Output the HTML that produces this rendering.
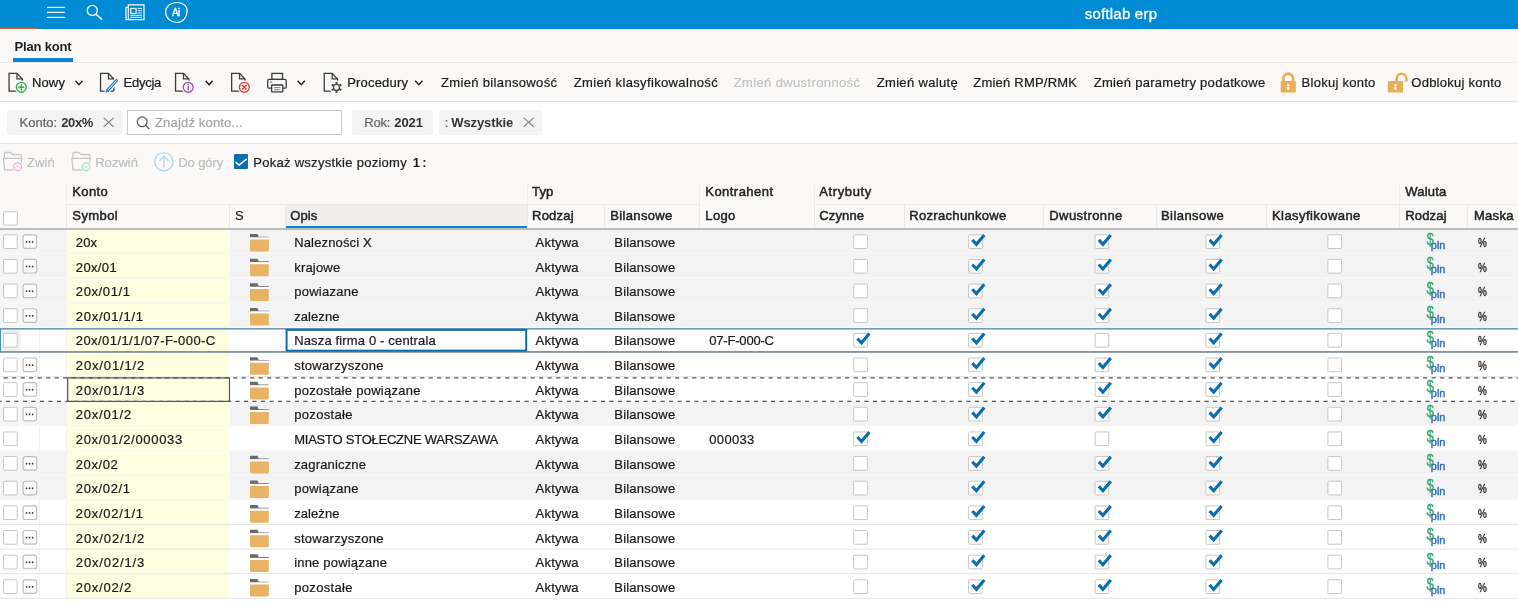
<!DOCTYPE html>
<html><head><meta charset="utf-8"><title>Plan kont</title>
<style>
html,body{margin:0;padding:0}
body{width:1518px;height:606px;overflow:hidden;background:#faf9f8;font-family:'Liberation Sans', sans-serif;position:relative}
.b{position:absolute}
.t{position:absolute;white-space:pre}
#tx{position:absolute;left:0;top:0;width:1518px;height:606px;will-change:transform}
svg{position:absolute;left:0;top:0;will-change:transform}
</style></head>
<body>
<div class="b" style="left:0;top:0;width:1518px;height:29px;background:#008ad3"></div>
<div class="b" style="left:0;top:28px;width:37px;height:1px;background:#d9673a"></div>
<div class="b" style="left:0;top:62px;width:1518px;height:1px;background:#e6e6e5"></div>
<div class="b" style="left:13px;top:58px;width:60.2px;height:4px;background:#0a84d0"></div>
<div class="b" style="left:0;top:101px;width:1518px;height:43px;background:#fff;border-top:1px solid #e3e3e2;border-bottom:1px solid #e3e3e2;box-sizing:border-box"></div>
<div class="b" style="left:7.3px;top:110.3px;width:114.4px;height:24.4px;background:#f3f3f3;border-radius:3px"></div>
<div class="b" style="left:127px;top:110.3px;width:215px;height:24.4px;background:#fff;border:1px solid #cbcbcb;box-sizing:border-box"></div>
<div class="b" style="left:351.8px;top:110.3px;width:81.5px;height:24.4px;background:#f3f3f3;border-radius:3px"></div>
<div class="b" style="left:438.8px;top:110.3px;width:103.2px;height:24.4px;background:#f3f3f3;border-radius:3px"></div>
<div class="b" style="left:234px;top:154px;width:14px;height:15px;background:#0b70b1;border-radius:1px"></div>
<div class="b" style="left:285.5px;top:205px;width:241.5px;height:23px;background:#efeeed"></div>
<div class="b" style="left:285.5px;top:226px;width:241.5px;height:2.3px;background:#0a84d0"></div>
<div class="b" style="left:66.7px;top:204px;width:632.6px;height:1px;background:#eae9e8"></div>
<div class="b" style="left:814.3px;top:204px;width:703.7px;height:1px;background:#eae9e8"></div>
<div class="b" style="left:66.2px;top:185px;width:1px;height:19px;background:#efeeed"></div>
<div class="b" style="left:66.2px;top:204px;width:1px;height:24px;background:#eae9e8"></div>
<div class="b" style="left:526.5px;top:185px;width:1px;height:19px;background:#efeeed"></div>
<div class="b" style="left:526.5px;top:204px;width:1px;height:24px;background:#eae9e8"></div>
<div class="b" style="left:698.8px;top:185px;width:1px;height:19px;background:#efeeed"></div>
<div class="b" style="left:698.8px;top:204px;width:1px;height:24px;background:#eae9e8"></div>
<div class="b" style="left:813.8px;top:185px;width:1px;height:19px;background:#efeeed"></div>
<div class="b" style="left:813.8px;top:204px;width:1px;height:24px;background:#eae9e8"></div>
<div class="b" style="left:1398.8px;top:185px;width:1px;height:19px;background:#efeeed"></div>
<div class="b" style="left:1398.8px;top:204px;width:1px;height:24px;background:#eae9e8"></div>
<div class="b" style="left:229.2px;top:205px;width:1px;height:23px;background:#eae9e8"></div>
<div class="b" style="left:284.8px;top:205px;width:1px;height:23px;background:#eae9e8"></div>
<div class="b" style="left:603.8px;top:205px;width:1px;height:23px;background:#eae9e8"></div>
<div class="b" style="left:903.5px;top:205px;width:1px;height:23px;background:#eae9e8"></div>
<div class="b" style="left:1043.2px;top:205px;width:1px;height:23px;background:#eae9e8"></div>
<div class="b" style="left:1155.5px;top:205px;width:1px;height:23px;background:#eae9e8"></div>
<div class="b" style="left:1265.8px;top:205px;width:1px;height:23px;background:#eae9e8"></div>
<div class="b" style="left:1466.9px;top:205px;width:1px;height:23px;background:#eae9e8"></div>
<div class="b" style="left:0;top:230px;width:1518px;height:376px;background:#fff"></div>
<div class="b" style="left:0;top:229px;width:1518px;height:25px;background:#f3f3f3"></div>
<div class="b" style="left:67px;top:229px;width:163px;height:25px;background:#feffe1"></div>
<div class="b" style="left:0px;top:229px;width:39px;height:24px;background:#f5f5f5"></div>
<div class="b" style="left:0;top:254px;width:1518px;height:24px;background:#f3f3f3"></div>
<div class="b" style="left:67px;top:254px;width:163px;height:24px;background:#feffe1"></div>
<div class="b" style="left:0px;top:254px;width:39px;height:23px;background:#f5f5f5"></div>
<div class="b" style="left:0;top:278px;width:1518px;height:25px;background:#f3f3f3"></div>
<div class="b" style="left:67px;top:278px;width:163px;height:25px;background:#feffe1"></div>
<div class="b" style="left:0px;top:278px;width:39px;height:24px;background:#f5f5f5"></div>
<div class="b" style="left:0;top:303px;width:1518px;height:25px;background:#f3f3f3"></div>
<div class="b" style="left:67px;top:303px;width:163px;height:25px;background:#feffe1"></div>
<div class="b" style="left:0px;top:303px;width:39px;height:24px;background:#f5f5f5"></div>
<div class="b" style="left:0;top:328px;width:1518px;height:24px;background:#fff"></div>
<div class="b" style="left:67px;top:328px;width:163px;height:24px;background:#feffe1"></div>
<div class="b" style="left:39px;top:328px;width:1px;height:23px;background:#f1f1f1"></div>
<div class="b" style="left:66px;top:328px;width:1px;height:23px;background:#f1f1f1"></div>
<div class="b" style="left:0;top:352px;width:1518px;height:25px;background:#fff"></div>
<div class="b" style="left:67px;top:352px;width:163px;height:25px;background:#feffe1"></div>
<div class="b" style="left:39px;top:352px;width:1px;height:24px;background:#f1f1f1"></div>
<div class="b" style="left:66px;top:352px;width:1px;height:24px;background:#f1f1f1"></div>
<div class="b" style="left:0;top:377px;width:1518px;height:25px;background:#fff"></div>
<div class="b" style="left:67px;top:377px;width:163px;height:25px;background:#feffe1"></div>
<div class="b" style="left:39px;top:377px;width:1px;height:24px;background:#f1f1f1"></div>
<div class="b" style="left:66px;top:377px;width:1px;height:24px;background:#f1f1f1"></div>
<div class="b" style="left:0;top:402px;width:1518px;height:24px;background:#f3f3f3"></div>
<div class="b" style="left:67px;top:402px;width:163px;height:24px;background:#feffe1"></div>
<div class="b" style="left:0px;top:402px;width:39px;height:23px;background:#f5f5f5"></div>
<div class="b" style="left:0;top:426px;width:1518px;height:25px;background:#fff"></div>
<div class="b" style="left:67px;top:426px;width:163px;height:25px;background:#feffe1"></div>
<div class="b" style="left:39px;top:426px;width:1px;height:24px;background:#f1f1f1"></div>
<div class="b" style="left:66px;top:426px;width:1px;height:24px;background:#f1f1f1"></div>
<div class="b" style="left:0;top:451px;width:1518px;height:25px;background:#f3f3f3"></div>
<div class="b" style="left:67px;top:451px;width:163px;height:25px;background:#feffe1"></div>
<div class="b" style="left:0px;top:451px;width:39px;height:24px;background:#f5f5f5"></div>
<div class="b" style="left:0;top:476px;width:1518px;height:24px;background:#f3f3f3"></div>
<div class="b" style="left:67px;top:476px;width:163px;height:24px;background:#feffe1"></div>
<div class="b" style="left:0px;top:476px;width:39px;height:23px;background:#f5f5f5"></div>
<div class="b" style="left:0;top:500px;width:1518px;height:25px;background:#fff"></div>
<div class="b" style="left:67px;top:500px;width:163px;height:25px;background:#feffe1"></div>
<div class="b" style="left:39px;top:500px;width:1px;height:24px;background:#f1f1f1"></div>
<div class="b" style="left:66px;top:500px;width:1px;height:24px;background:#f1f1f1"></div>
<div class="b" style="left:0;top:525px;width:1518px;height:25px;background:#fff"></div>
<div class="b" style="left:67px;top:525px;width:163px;height:25px;background:#feffe1"></div>
<div class="b" style="left:39px;top:525px;width:1px;height:24px;background:#f1f1f1"></div>
<div class="b" style="left:66px;top:525px;width:1px;height:24px;background:#f1f1f1"></div>
<div class="b" style="left:0;top:550px;width:1518px;height:24px;background:#fff"></div>
<div class="b" style="left:67px;top:550px;width:163px;height:24px;background:#feffe1"></div>
<div class="b" style="left:39px;top:550px;width:1px;height:23px;background:#f1f1f1"></div>
<div class="b" style="left:66px;top:550px;width:1px;height:23px;background:#f1f1f1"></div>
<div class="b" style="left:0;top:574px;width:1518px;height:25px;background:#fff"></div>
<div class="b" style="left:67px;top:574px;width:163px;height:25px;background:#feffe1"></div>
<div class="b" style="left:39px;top:574px;width:1px;height:24px;background:#f1f1f1"></div>
<div class="b" style="left:66px;top:574px;width:1px;height:24px;background:#f1f1f1"></div>
<div class="b" style="left:0;top:228px;width:1518px;height:2px;background:#bcbcbc"></div>
<svg width="1518" height="606" viewBox="0 0 1518 606">
<rect x="0" y="252.79" width="1518" height="1.1" fill="#f9f9f9"/>
<rect x="67" y="252.79" width="163" height="1.1" fill="#f6f6ea"/>
<rect x="0" y="277.44" width="1518" height="1.1" fill="#f9f9f9"/>
<rect x="67" y="277.44" width="163" height="1.1" fill="#f6f6ea"/>
<rect x="0" y="302.08" width="1518" height="1.1" fill="#f9f9f9"/>
<rect x="67" y="302.08" width="163" height="1.1" fill="#f6f6ea"/>
<rect x="0" y="326.72" width="1518" height="1.1" fill="#f9f9f9"/>
<rect x="67" y="326.72" width="163" height="1.1" fill="#f6f6ea"/>
<rect x="0" y="351.36" width="1518" height="1.1" fill="#e6e6e6"/>
<rect x="67" y="351.36" width="163" height="1.1" fill="#ededdf"/>
<rect x="0" y="376.01" width="1518" height="1.1" fill="#e6e6e6"/>
<rect x="67" y="376.01" width="163" height="1.1" fill="#ededdf"/>
<rect x="0" y="400.65" width="1518" height="1.1" fill="#f9f9f9"/>
<rect x="67" y="400.65" width="163" height="1.1" fill="#f6f6ea"/>
<rect x="0" y="425.29" width="1518" height="1.1" fill="#f9f9f9"/>
<rect x="67" y="425.29" width="163" height="1.1" fill="#f6f6ea"/>
<rect x="0" y="449.94" width="1518" height="1.1" fill="#f9f9f9"/>
<rect x="67" y="449.94" width="163" height="1.1" fill="#f6f6ea"/>
<rect x="0" y="474.58" width="1518" height="1.1" fill="#f9f9f9"/>
<rect x="67" y="474.58" width="163" height="1.1" fill="#f6f6ea"/>
<rect x="0" y="499.22" width="1518" height="1.1" fill="#f9f9f9"/>
<rect x="67" y="499.22" width="163" height="1.1" fill="#f6f6ea"/>
<rect x="0" y="523.87" width="1518" height="1.1" fill="#e6e6e6"/>
<rect x="67" y="523.87" width="163" height="1.1" fill="#ededdf"/>
<rect x="0" y="548.51" width="1518" height="1.1" fill="#e6e6e6"/>
<rect x="67" y="548.51" width="163" height="1.1" fill="#ededdf"/>
<rect x="0" y="573.15" width="1518" height="1.1" fill="#e6e6e6"/>
<rect x="67" y="573.15" width="163" height="1.1" fill="#ededdf"/>
<rect x="0" y="597.80" width="1518" height="1.1" fill="#e6e6e6"/>
<rect x="67" y="597.80" width="163" height="1.1" fill="#ededdf"/>
<rect x="47" y="6.80" width="17.8" height="1.2" fill="#fff"/>
<rect x="47" y="11.75" width="17.8" height="1.2" fill="#fff"/>
<rect x="47" y="16.80" width="17.8" height="1.2" fill="#fff"/>
<circle cx="92.3" cy="10.4" r="5" fill="none" stroke="#fff" stroke-width="1.4"/><line x1="96" y1="14.2" x2="102" y2="19.6" stroke="#fff" stroke-width="1.5"/>
<path d="M128.3 4.9 H144 V19.6 H126 V7.3 H128.3 Z" fill="none" stroke="#fff" stroke-width="1.2"/><line x1="128.3" y1="7" x2="128.3" y2="19.6" stroke="#fff" stroke-width="1.1"/><rect x="130.8" y="8.4" width="5.3" height="5" fill="none" stroke="#fff" stroke-width="1.1"/><path d="M137.7 8.4 h4.3 M137.7 10.7 h4.3 M137.7 13 h4.3 M130.3 15.3 h11.7 M130.3 17.3 h11.7" stroke="#fff" stroke-width="0.9" fill="none"/>
<path d="M165.7 12.8 C165.2 6.5 170.5 2.3 177.2 2.5 C183.6 2.7 187.6 6.2 187.1 11.6 C186.6 17.8 182.6 22.6 177 22.5 C171 22.4 166.2 18.8 165.7 12.8 Z" fill="none" stroke="#fff" stroke-width="1.2"/>
<path d="M22.35 91.05 H9.05 V73.35 H16.95 L22.35 78.95 V91.05" fill="none" stroke="#3c3c3c" stroke-width="1.3" stroke-linejoin="miter"/><path d="M16.95 73.35 V78.95 H22.35" fill="none" stroke="#3c3c3c" stroke-width="1.2"/>
<circle cx="21.30" cy="87.30" r="6.7" fill="#faf9f8"/><circle cx="21.30" cy="87.30" r="4.95" fill="none" stroke="#2db34e" stroke-width="1.3"/><path d="M18.30 87.30 h6 M21.30 84.30 v6" stroke="#2db34e" stroke-width="1.4" fill="none"/>
<polyline points="75.50,80.80 79.00,84.80 82.50,80.80" fill="none" stroke="#222" stroke-width="1.4"/>
<path d="M113.85 91.05 H100.55 V73.35 H108.45 L113.85 78.95 V91.05" fill="none" stroke="#3c3c3c" stroke-width="1.3" stroke-linejoin="miter"/><path d="M108.45 73.35 V78.95 H113.85" fill="none" stroke="#3c3c3c" stroke-width="1.2"/>
<line x1="117.4" y1="79.4" x2="105.8" y2="92.5" stroke="#faf9f8" stroke-width="5.6"/>
<path d="M108.9 91.3 L105.9 92.4 L106.7 89.3 Z" fill="#2c8ad6" stroke="#2c8ad6" stroke-width="0.8" stroke-linejoin="round"/><line x1="116.4" y1="80.5" x2="107.9" y2="90.1" stroke="#2c8ad6" stroke-width="3.1" stroke-linecap="round"/><line x1="116.2" y1="80.8" x2="108.2" y2="89.8" stroke="#e9f3fb" stroke-width="0.9" stroke-linecap="round"/>
<path d="M188.85 91.05 H175.55 V73.35 H183.45 L188.85 78.95 V91.05" fill="none" stroke="#3c3c3c" stroke-width="1.3" stroke-linejoin="miter"/><path d="M183.45 73.35 V78.95 H188.85" fill="none" stroke="#3c3c3c" stroke-width="1.2"/>
<circle cx="188.20" cy="87.30" r="6.7" fill="#faf9f8"/><circle cx="188.20" cy="87.30" r="4.95" fill="none" stroke="#a443b5" stroke-width="1.3"/><path d="M188.20 86.10 v4.2" stroke="#a443b5" stroke-width="1.3" fill="none"/><circle cx="188.20" cy="84.50" r="0.8" fill="#a443b5"/>
<polyline points="205.70,80.80 209.10,84.80 212.50,80.80" fill="none" stroke="#222" stroke-width="1.4"/>
<path d="M244.95 91.05 H231.65 V73.35 H239.55 L244.95 78.95 V91.05" fill="none" stroke="#3c3c3c" stroke-width="1.3" stroke-linejoin="miter"/><path d="M239.55 73.35 V78.95 H244.95" fill="none" stroke="#3c3c3c" stroke-width="1.2"/>
<circle cx="244.30" cy="87.30" r="6.7" fill="#faf9f8"/><circle cx="244.30" cy="87.30" r="4.95" fill="none" stroke="#e53a3a" stroke-width="1.3"/><path d="M242.10 85.10 l4.4 4.4 M246.50 85.10 l-4.4 4.4" stroke="#e53a3a" stroke-width="1.4" fill="none"/>
<rect x="271.9" y="73.4" width="10.6" height="6" fill="none" stroke="#3c3c3c" stroke-width="1.3"/><path d="M271.5 88.2 H269 a1.3 1.3 0 0 1 -1.3 -1.3 V80.7 a1.3 1.3 0 0 1 1.3 -1.3 H284.9 a1.3 1.3 0 0 1 1.3 1.3 V86.9 a1.3 1.3 0 0 1 -1.3 1.3 H283" fill="none" stroke="#3c3c3c" stroke-width="1.3"/><rect x="271.6" y="85" width="11.2" height="6.9" rx="0.6" fill="#faf9f8" stroke="#3c3c3c" stroke-width="1.3"/><path d="M274 87.6 h6.4 M274 89.7 h6.4" stroke="#777" stroke-width="0.9"/><rect x="270" y="81.4" width="2.2" height="1.2" fill="#2c8ad6"/>
<polyline points="297.70,80.80 301.25,84.80 304.80,80.80" fill="none" stroke="#222" stroke-width="1.4"/>
<path d="M337.55 91.05 H324.25 V73.35 H332.15 L337.55 78.95 V91.05" fill="none" stroke="#3c3c3c" stroke-width="1.3" stroke-linejoin="miter"/><path d="M332.15 73.35 V78.95 H337.55" fill="none" stroke="#3c3c3c" stroke-width="1.2"/>
<circle cx="336.50" cy="87.40" r="6.9" fill="#faf9f8"/><circle cx="336.50" cy="87.40" r="3.0" fill="none" stroke="#4a4a4a" stroke-width="1.4"/><line x1="339.44" y1="89.10" x2="341.26" y2="90.15" stroke="#4a4a4a" stroke-width="2.1"/><line x1="336.50" y1="90.80" x2="336.50" y2="92.90" stroke="#4a4a4a" stroke-width="2.1"/><line x1="333.56" y1="89.10" x2="331.74" y2="90.15" stroke="#4a4a4a" stroke-width="2.1"/><line x1="333.56" y1="85.70" x2="331.74" y2="84.65" stroke="#4a4a4a" stroke-width="2.1"/><line x1="336.50" y1="84.00" x2="336.50" y2="81.90" stroke="#4a4a4a" stroke-width="2.1"/><line x1="339.44" y1="85.70" x2="341.26" y2="84.65" stroke="#4a4a4a" stroke-width="2.1"/>
<polyline points="415.20,80.80 418.85,84.80 422.50,80.80" fill="none" stroke="#222" stroke-width="1.4"/>
<rect x="1280.70" y="81.1" width="15.1" height="11.4" rx="0.8" fill="#e8b055"/><path d="M1283.40 82 V78.6 a4.85 4.85 0 0 1 9.7 0 V82" fill="none" stroke="#e8b055" stroke-width="2.8"/><circle cx="1288.25" cy="85.3" r="1.25" fill="#fff"/><rect x="1287.05" y="87.2" width="2.4" height="2.6" fill="#fff"/>
<rect x="1387.80" y="81.1" width="15.2" height="11.4" rx="0.8" fill="#e8b055"/><path d="M1396.70 82 V78.6 a4.85 4.85 0 0 1 9.7 0 V81.6" fill="none" stroke="#e8b055" stroke-width="2.6"/><circle cx="1395.40" cy="85.3" r="1.25" fill="#fff"/><rect x="1394.20" y="87.2" width="2.4" height="2.6" fill="#fff"/>
<path d="M103.7 117.9 l9.9 8.9 M113.6 117.9 l-9.9 8.9" stroke="#858585" stroke-width="1.15" fill="none"/>
<circle cx="142.2" cy="121.8" r="4.9" fill="none" stroke="#555" stroke-width="1.2"/><line x1="145.8" y1="125.4" x2="149.3" y2="129" stroke="#555" stroke-width="1.3"/>
<path d="M523.7 117.9 l9.9 8.9 M533.6 117.9 l-9.9 8.9" stroke="#858585" stroke-width="1.15" fill="none"/>
<path d="M4.40 158 V153.5 a1 1 0 0 1 1 -1 H10.10 L12.90 154.5 H20.20 a1 1 0 0 1 1 1 V158" fill="none" stroke="#c6c6c6" stroke-width="1.3"/><path d="M4.60 170 L3.40 158.4 H21.90 L21.20 163" fill="none" stroke="#c6c6c6" stroke-width="1.3" stroke-linejoin="round"/><path d="M4.00 170 H13.70" stroke="#c6c6c6" stroke-width="1.3"/><circle cx="17.60" cy="166.80" r="5.1" fill="#faf9f8"/><circle cx="17.60" cy="166.80" r="3.9" fill="none" stroke="#e8b6e4" stroke-width="1.2"/><polyline points="15.60,167.70 17.60,165.70 19.60,167.70" fill="none" stroke="#e8b6e4" stroke-width="1"/>
<path d="M72.90 158 V153.5 a1 1 0 0 1 1 -1 H78.60 L81.40 154.5 H88.70 a1 1 0 0 1 1 1 V158" fill="none" stroke="#c6c6c6" stroke-width="1.3"/><path d="M73.10 170 L71.90 158.4 H90.40 L89.70 163" fill="none" stroke="#c6c6c6" stroke-width="1.3" stroke-linejoin="round"/><path d="M72.50 170 H82.20" stroke="#c6c6c6" stroke-width="1.3"/><circle cx="86.10" cy="166.80" r="5.1" fill="#faf9f8"/><circle cx="86.10" cy="166.80" r="3.9" fill="none" stroke="#a6dfb4" stroke-width="1.2"/><polyline points="84.10,165.90 86.10,167.90 88.10,165.90" fill="none" stroke="#a6dfb4" stroke-width="1"/>
<circle cx="163.9" cy="161.7" r="9.1" fill="none" stroke="#b3d7f0" stroke-width="1.4"/><path d="M163.9 167.6 V156.4 M159.3 161 L163.9 156.2 L168.5 161" fill="none" stroke="#b3d7f0" stroke-width="1.4"/>
<polyline points="235.6,162.2 239.1,165 246.8,158.8" fill="none" stroke="#fff" stroke-width="1.6"/>
<rect x="3.5" y="211.8" width="13.8" height="13.3" rx="0.7" fill="#fff" stroke="#c7c7c7"/>
<rect x="3.50" y="234.80" width="13.7" height="13.7" rx="0.7" fill="#fff" stroke="#c7c7c7" stroke-width="1"/>
<rect x="23.10" y="234.80" width="13.6" height="13.6" rx="2.3" fill="#fcfcfc" stroke="#bebebe" stroke-width="1.15"/><rect x="25.80" y="241.10" width="1.5" height="1.6" fill="#333"/><rect x="28.85" y="241.10" width="1.5" height="1.6" fill="#333"/><rect x="31.90" y="241.10" width="1.5" height="1.6" fill="#333"/>
<path d="M250.00 234.00 h7.4 l1.3 2.7 h10.1 v0.9 h-18.8 z" fill="#6a6a6a"/><rect x="250.00" y="237.50" width="18.8" height="2.2" fill="#fff"/><path d="M250.00 239.60 h18.8 v10.6 a1.4 1.4 0 0 1 -1.4 1.4 h-16 a1.4 1.4 0 0 1 -1.4 -1.4 z" fill="#e8b364"/>
<rect x="853.70" y="234.80" width="13.7" height="13.7" rx="0.7" fill="#fff" stroke="#c7c7c7" stroke-width="1"/>
<rect x="968.60" y="234.80" width="13.7" height="13.7" rx="0.7" fill="#fff" stroke="#c7c7c7" stroke-width="1"/><polyline points="972.30,239.90 976.40,244.30 984.30,234.90" fill="none" stroke="#0a6eae" stroke-width="3.1"/>
<rect x="1095.10" y="234.80" width="13.7" height="13.7" rx="0.7" fill="#fff" stroke="#c7c7c7" stroke-width="1"/><polyline points="1098.80,239.90 1102.90,244.30 1110.80,234.90" fill="none" stroke="#0a6eae" stroke-width="3.1"/>
<rect x="1205.90" y="234.80" width="13.7" height="13.7" rx="0.7" fill="#fff" stroke="#c7c7c7" stroke-width="1"/><polyline points="1209.60,239.90 1213.70,244.30 1221.60,234.90" fill="none" stroke="#0a6eae" stroke-width="3.1"/>
<rect x="1327.90" y="234.80" width="13.7" height="13.7" rx="0.7" fill="#fff" stroke="#c7c7c7" stroke-width="1"/>
<text x="1426.4" y="244.50" font-family="'Liberation Sans', sans-serif" font-size="16.6" fill="#38a673" stroke="#38a673" stroke-width="0.3" textLength="7.4" lengthAdjust="spacingAndGlyphs">$</text><text x="1430.8" y="248.70" font-family="'Liberation Sans', sans-serif" font-size="11.3" font-weight="400" fill="#3a73b9" stroke="#3a73b9" stroke-width="0.45" textLength="14.6" lengthAdjust="spacingAndGlyphs">pln</text>
<rect x="3.50" y="259.44" width="13.7" height="13.7" rx="0.7" fill="#fff" stroke="#c7c7c7" stroke-width="1"/>
<rect x="23.10" y="259.44" width="13.6" height="13.6" rx="2.3" fill="#fcfcfc" stroke="#bebebe" stroke-width="1.15"/><rect x="25.80" y="265.74" width="1.5" height="1.6" fill="#333"/><rect x="28.85" y="265.74" width="1.5" height="1.6" fill="#333"/><rect x="31.90" y="265.74" width="1.5" height="1.6" fill="#333"/>
<path d="M250.00 258.64 h7.4 l1.3 2.7 h10.1 v0.9 h-18.8 z" fill="#6a6a6a"/><rect x="250.00" y="262.14" width="18.8" height="2.2" fill="#fff"/><path d="M250.00 264.24 h18.8 v10.6 a1.4 1.4 0 0 1 -1.4 1.4 h-16 a1.4 1.4 0 0 1 -1.4 -1.4 z" fill="#e8b364"/>
<rect x="853.70" y="259.44" width="13.7" height="13.7" rx="0.7" fill="#fff" stroke="#c7c7c7" stroke-width="1"/>
<rect x="968.60" y="259.44" width="13.7" height="13.7" rx="0.7" fill="#fff" stroke="#c7c7c7" stroke-width="1"/><polyline points="972.30,264.54 976.40,268.94 984.30,259.54" fill="none" stroke="#0a6eae" stroke-width="3.1"/>
<rect x="1095.10" y="259.44" width="13.7" height="13.7" rx="0.7" fill="#fff" stroke="#c7c7c7" stroke-width="1"/><polyline points="1098.80,264.54 1102.90,268.94 1110.80,259.54" fill="none" stroke="#0a6eae" stroke-width="3.1"/>
<rect x="1205.90" y="259.44" width="13.7" height="13.7" rx="0.7" fill="#fff" stroke="#c7c7c7" stroke-width="1"/><polyline points="1209.60,264.54 1213.70,268.94 1221.60,259.54" fill="none" stroke="#0a6eae" stroke-width="3.1"/>
<rect x="1327.90" y="259.44" width="13.7" height="13.7" rx="0.7" fill="#fff" stroke="#c7c7c7" stroke-width="1"/>
<text x="1426.4" y="269.14" font-family="'Liberation Sans', sans-serif" font-size="16.6" fill="#38a673" stroke="#38a673" stroke-width="0.3" textLength="7.4" lengthAdjust="spacingAndGlyphs">$</text><text x="1430.8" y="273.34" font-family="'Liberation Sans', sans-serif" font-size="11.3" font-weight="400" fill="#3a73b9" stroke="#3a73b9" stroke-width="0.45" textLength="14.6" lengthAdjust="spacingAndGlyphs">pln</text>
<rect x="3.50" y="284.09" width="13.7" height="13.7" rx="0.7" fill="#fff" stroke="#c7c7c7" stroke-width="1"/>
<rect x="23.10" y="284.09" width="13.6" height="13.6" rx="2.3" fill="#fcfcfc" stroke="#bebebe" stroke-width="1.15"/><rect x="25.80" y="290.39" width="1.5" height="1.6" fill="#333"/><rect x="28.85" y="290.39" width="1.5" height="1.6" fill="#333"/><rect x="31.90" y="290.39" width="1.5" height="1.6" fill="#333"/>
<path d="M250.00 283.29 h7.4 l1.3 2.7 h10.1 v0.9 h-18.8 z" fill="#6a6a6a"/><rect x="250.00" y="286.79" width="18.8" height="2.2" fill="#fff"/><path d="M250.00 288.89 h18.8 v10.6 a1.4 1.4 0 0 1 -1.4 1.4 h-16 a1.4 1.4 0 0 1 -1.4 -1.4 z" fill="#e8b364"/>
<rect x="853.70" y="284.09" width="13.7" height="13.7" rx="0.7" fill="#fff" stroke="#c7c7c7" stroke-width="1"/>
<rect x="968.60" y="284.09" width="13.7" height="13.7" rx="0.7" fill="#fff" stroke="#c7c7c7" stroke-width="1"/><polyline points="972.30,289.19 976.40,293.59 984.30,284.19" fill="none" stroke="#0a6eae" stroke-width="3.1"/>
<rect x="1095.10" y="284.09" width="13.7" height="13.7" rx="0.7" fill="#fff" stroke="#c7c7c7" stroke-width="1"/><polyline points="1098.80,289.19 1102.90,293.59 1110.80,284.19" fill="none" stroke="#0a6eae" stroke-width="3.1"/>
<rect x="1205.90" y="284.09" width="13.7" height="13.7" rx="0.7" fill="#fff" stroke="#c7c7c7" stroke-width="1"/><polyline points="1209.60,289.19 1213.70,293.59 1221.60,284.19" fill="none" stroke="#0a6eae" stroke-width="3.1"/>
<rect x="1327.90" y="284.09" width="13.7" height="13.7" rx="0.7" fill="#fff" stroke="#c7c7c7" stroke-width="1"/>
<text x="1426.4" y="293.79" font-family="'Liberation Sans', sans-serif" font-size="16.6" fill="#38a673" stroke="#38a673" stroke-width="0.3" textLength="7.4" lengthAdjust="spacingAndGlyphs">$</text><text x="1430.8" y="297.99" font-family="'Liberation Sans', sans-serif" font-size="11.3" font-weight="400" fill="#3a73b9" stroke="#3a73b9" stroke-width="0.45" textLength="14.6" lengthAdjust="spacingAndGlyphs">pln</text>
<rect x="3.50" y="308.73" width="13.7" height="13.7" rx="0.7" fill="#fff" stroke="#c7c7c7" stroke-width="1"/>
<rect x="23.10" y="308.73" width="13.6" height="13.6" rx="2.3" fill="#fcfcfc" stroke="#bebebe" stroke-width="1.15"/><rect x="25.80" y="315.03" width="1.5" height="1.6" fill="#333"/><rect x="28.85" y="315.03" width="1.5" height="1.6" fill="#333"/><rect x="31.90" y="315.03" width="1.5" height="1.6" fill="#333"/>
<path d="M250.00 307.93 h7.4 l1.3 2.7 h10.1 v0.9 h-18.8 z" fill="#6a6a6a"/><rect x="250.00" y="311.43" width="18.8" height="2.2" fill="#fff"/><path d="M250.00 313.53 h18.8 v10.6 a1.4 1.4 0 0 1 -1.4 1.4 h-16 a1.4 1.4 0 0 1 -1.4 -1.4 z" fill="#e8b364"/>
<rect x="853.70" y="308.73" width="13.7" height="13.7" rx="0.7" fill="#fff" stroke="#c7c7c7" stroke-width="1"/>
<rect x="968.60" y="308.73" width="13.7" height="13.7" rx="0.7" fill="#fff" stroke="#c7c7c7" stroke-width="1"/><polyline points="972.30,313.83 976.40,318.23 984.30,308.83" fill="none" stroke="#0a6eae" stroke-width="3.1"/>
<rect x="1095.10" y="308.73" width="13.7" height="13.7" rx="0.7" fill="#fff" stroke="#c7c7c7" stroke-width="1"/><polyline points="1098.80,313.83 1102.90,318.23 1110.80,308.83" fill="none" stroke="#0a6eae" stroke-width="3.1"/>
<rect x="1205.90" y="308.73" width="13.7" height="13.7" rx="0.7" fill="#fff" stroke="#c7c7c7" stroke-width="1"/><polyline points="1209.60,313.83 1213.70,318.23 1221.60,308.83" fill="none" stroke="#0a6eae" stroke-width="3.1"/>
<rect x="1327.90" y="308.73" width="13.7" height="13.7" rx="0.7" fill="#fff" stroke="#c7c7c7" stroke-width="1"/>
<text x="1426.4" y="318.43" font-family="'Liberation Sans', sans-serif" font-size="16.6" fill="#38a673" stroke="#38a673" stroke-width="0.3" textLength="7.4" lengthAdjust="spacingAndGlyphs">$</text><text x="1430.8" y="322.63" font-family="'Liberation Sans', sans-serif" font-size="11.3" font-weight="400" fill="#3a73b9" stroke="#3a73b9" stroke-width="0.45" textLength="14.6" lengthAdjust="spacingAndGlyphs">pln</text>
<rect x="1.5" y="329.47" width="19.3" height="21.6" fill="#efefef"/>
<rect x="3.50" y="333.37" width="13.7" height="13.7" rx="0.7" fill="#fff" stroke="#c7c7c7" stroke-width="1"/>
<rect x="853.70" y="333.37" width="13.7" height="13.7" rx="0.7" fill="#fff" stroke="#c7c7c7" stroke-width="1"/><polyline points="857.40,338.47 861.50,342.87 869.40,333.47" fill="none" stroke="#0a6eae" stroke-width="3.1"/>
<rect x="968.60" y="333.37" width="13.7" height="13.7" rx="0.7" fill="#fff" stroke="#c7c7c7" stroke-width="1"/><polyline points="972.30,338.47 976.40,342.87 984.30,333.47" fill="none" stroke="#0a6eae" stroke-width="3.1"/>
<rect x="1095.10" y="333.37" width="13.7" height="13.7" rx="0.7" fill="#fff" stroke="#c7c7c7" stroke-width="1"/>
<rect x="1205.90" y="333.37" width="13.7" height="13.7" rx="0.7" fill="#fff" stroke="#c7c7c7" stroke-width="1"/><polyline points="1209.60,338.47 1213.70,342.87 1221.60,333.47" fill="none" stroke="#0a6eae" stroke-width="3.1"/>
<rect x="1327.90" y="333.37" width="13.7" height="13.7" rx="0.7" fill="#fff" stroke="#c7c7c7" stroke-width="1"/>
<text x="1426.4" y="343.07" font-family="'Liberation Sans', sans-serif" font-size="16.6" fill="#38a673" stroke="#38a673" stroke-width="0.3" textLength="7.4" lengthAdjust="spacingAndGlyphs">$</text><text x="1430.8" y="347.27" font-family="'Liberation Sans', sans-serif" font-size="11.3" font-weight="400" fill="#3a73b9" stroke="#3a73b9" stroke-width="0.45" textLength="14.6" lengthAdjust="spacingAndGlyphs">pln</text>
<rect x="3.50" y="358.01" width="13.7" height="13.7" rx="0.7" fill="#fff" stroke="#c7c7c7" stroke-width="1"/>
<rect x="23.10" y="358.01" width="13.6" height="13.6" rx="2.3" fill="#fcfcfc" stroke="#bebebe" stroke-width="1.15"/><rect x="25.80" y="364.31" width="1.5" height="1.6" fill="#333"/><rect x="28.85" y="364.31" width="1.5" height="1.6" fill="#333"/><rect x="31.90" y="364.31" width="1.5" height="1.6" fill="#333"/>
<path d="M250.00 357.21 h7.4 l1.3 2.7 h10.1 v0.9 h-18.8 z" fill="#6a6a6a"/><rect x="250.00" y="360.71" width="18.8" height="2.2" fill="#fff"/><path d="M250.00 362.81 h18.8 v10.6 a1.4 1.4 0 0 1 -1.4 1.4 h-16 a1.4 1.4 0 0 1 -1.4 -1.4 z" fill="#e8b364"/>
<rect x="853.70" y="358.01" width="13.7" height="13.7" rx="0.7" fill="#fff" stroke="#c7c7c7" stroke-width="1"/>
<rect x="968.60" y="358.01" width="13.7" height="13.7" rx="0.7" fill="#fff" stroke="#c7c7c7" stroke-width="1"/><polyline points="972.30,363.12 976.40,367.51 984.30,358.12" fill="none" stroke="#0a6eae" stroke-width="3.1"/>
<rect x="1095.10" y="358.01" width="13.7" height="13.7" rx="0.7" fill="#fff" stroke="#c7c7c7" stroke-width="1"/><polyline points="1098.80,363.12 1102.90,367.51 1110.80,358.12" fill="none" stroke="#0a6eae" stroke-width="3.1"/>
<rect x="1205.90" y="358.01" width="13.7" height="13.7" rx="0.7" fill="#fff" stroke="#c7c7c7" stroke-width="1"/><polyline points="1209.60,363.12 1213.70,367.51 1221.60,358.12" fill="none" stroke="#0a6eae" stroke-width="3.1"/>
<rect x="1327.90" y="358.01" width="13.7" height="13.7" rx="0.7" fill="#fff" stroke="#c7c7c7" stroke-width="1"/>
<text x="1426.4" y="367.71" font-family="'Liberation Sans', sans-serif" font-size="16.6" fill="#38a673" stroke="#38a673" stroke-width="0.3" textLength="7.4" lengthAdjust="spacingAndGlyphs">$</text><text x="1430.8" y="371.91" font-family="'Liberation Sans', sans-serif" font-size="11.3" font-weight="400" fill="#3a73b9" stroke="#3a73b9" stroke-width="0.45" textLength="14.6" lengthAdjust="spacingAndGlyphs">pln</text>
<rect x="3.50" y="382.66" width="13.7" height="13.7" rx="0.7" fill="#fff" stroke="#c7c7c7" stroke-width="1"/>
<rect x="23.10" y="382.66" width="13.6" height="13.6" rx="2.3" fill="#fcfcfc" stroke="#bebebe" stroke-width="1.15"/><rect x="25.80" y="388.96" width="1.5" height="1.6" fill="#333"/><rect x="28.85" y="388.96" width="1.5" height="1.6" fill="#333"/><rect x="31.90" y="388.96" width="1.5" height="1.6" fill="#333"/>
<path d="M250.00 381.86 h7.4 l1.3 2.7 h10.1 v0.9 h-18.8 z" fill="#6a6a6a"/><rect x="250.00" y="385.36" width="18.8" height="2.2" fill="#fff"/><path d="M250.00 387.46 h18.8 v10.6 a1.4 1.4 0 0 1 -1.4 1.4 h-16 a1.4 1.4 0 0 1 -1.4 -1.4 z" fill="#e8b364"/>
<rect x="853.70" y="382.66" width="13.7" height="13.7" rx="0.7" fill="#fff" stroke="#c7c7c7" stroke-width="1"/>
<rect x="968.60" y="382.66" width="13.7" height="13.7" rx="0.7" fill="#fff" stroke="#c7c7c7" stroke-width="1"/><polyline points="972.30,387.76 976.40,392.16 984.30,382.76" fill="none" stroke="#0a6eae" stroke-width="3.1"/>
<rect x="1095.10" y="382.66" width="13.7" height="13.7" rx="0.7" fill="#fff" stroke="#c7c7c7" stroke-width="1"/><polyline points="1098.80,387.76 1102.90,392.16 1110.80,382.76" fill="none" stroke="#0a6eae" stroke-width="3.1"/>
<rect x="1205.90" y="382.66" width="13.7" height="13.7" rx="0.7" fill="#fff" stroke="#c7c7c7" stroke-width="1"/><polyline points="1209.60,387.76 1213.70,392.16 1221.60,382.76" fill="none" stroke="#0a6eae" stroke-width="3.1"/>
<rect x="1327.90" y="382.66" width="13.7" height="13.7" rx="0.7" fill="#fff" stroke="#c7c7c7" stroke-width="1"/>
<text x="1426.4" y="392.36" font-family="'Liberation Sans', sans-serif" font-size="16.6" fill="#38a673" stroke="#38a673" stroke-width="0.3" textLength="7.4" lengthAdjust="spacingAndGlyphs">$</text><text x="1430.8" y="396.56" font-family="'Liberation Sans', sans-serif" font-size="11.3" font-weight="400" fill="#3a73b9" stroke="#3a73b9" stroke-width="0.45" textLength="14.6" lengthAdjust="spacingAndGlyphs">pln</text>
<rect x="3.50" y="407.30" width="13.7" height="13.7" rx="0.7" fill="#fff" stroke="#c7c7c7" stroke-width="1"/>
<rect x="23.10" y="407.30" width="13.6" height="13.6" rx="2.3" fill="#fcfcfc" stroke="#bebebe" stroke-width="1.15"/><rect x="25.80" y="413.60" width="1.5" height="1.6" fill="#333"/><rect x="28.85" y="413.60" width="1.5" height="1.6" fill="#333"/><rect x="31.90" y="413.60" width="1.5" height="1.6" fill="#333"/>
<path d="M250.00 406.50 h7.4 l1.3 2.7 h10.1 v0.9 h-18.8 z" fill="#6a6a6a"/><rect x="250.00" y="410.00" width="18.8" height="2.2" fill="#fff"/><path d="M250.00 412.10 h18.8 v10.6 a1.4 1.4 0 0 1 -1.4 1.4 h-16 a1.4 1.4 0 0 1 -1.4 -1.4 z" fill="#e8b364"/>
<rect x="853.70" y="407.30" width="13.7" height="13.7" rx="0.7" fill="#fff" stroke="#c7c7c7" stroke-width="1"/>
<rect x="968.60" y="407.30" width="13.7" height="13.7" rx="0.7" fill="#fff" stroke="#c7c7c7" stroke-width="1"/><polyline points="972.30,412.40 976.40,416.80 984.30,407.40" fill="none" stroke="#0a6eae" stroke-width="3.1"/>
<rect x="1095.10" y="407.30" width="13.7" height="13.7" rx="0.7" fill="#fff" stroke="#c7c7c7" stroke-width="1"/><polyline points="1098.80,412.40 1102.90,416.80 1110.80,407.40" fill="none" stroke="#0a6eae" stroke-width="3.1"/>
<rect x="1205.90" y="407.30" width="13.7" height="13.7" rx="0.7" fill="#fff" stroke="#c7c7c7" stroke-width="1"/><polyline points="1209.60,412.40 1213.70,416.80 1221.60,407.40" fill="none" stroke="#0a6eae" stroke-width="3.1"/>
<rect x="1327.90" y="407.30" width="13.7" height="13.7" rx="0.7" fill="#fff" stroke="#c7c7c7" stroke-width="1"/>
<text x="1426.4" y="417.00" font-family="'Liberation Sans', sans-serif" font-size="16.6" fill="#38a673" stroke="#38a673" stroke-width="0.3" textLength="7.4" lengthAdjust="spacingAndGlyphs">$</text><text x="1430.8" y="421.20" font-family="'Liberation Sans', sans-serif" font-size="11.3" font-weight="400" fill="#3a73b9" stroke="#3a73b9" stroke-width="0.45" textLength="14.6" lengthAdjust="spacingAndGlyphs">pln</text>
<rect x="3.50" y="431.94" width="13.7" height="13.7" rx="0.7" fill="#fff" stroke="#c7c7c7" stroke-width="1"/>
<rect x="853.70" y="431.94" width="13.7" height="13.7" rx="0.7" fill="#fff" stroke="#c7c7c7" stroke-width="1"/><polyline points="857.40,437.04 861.50,441.44 869.40,432.04" fill="none" stroke="#0a6eae" stroke-width="3.1"/>
<rect x="968.60" y="431.94" width="13.7" height="13.7" rx="0.7" fill="#fff" stroke="#c7c7c7" stroke-width="1"/><polyline points="972.30,437.04 976.40,441.44 984.30,432.04" fill="none" stroke="#0a6eae" stroke-width="3.1"/>
<rect x="1095.10" y="431.94" width="13.7" height="13.7" rx="0.7" fill="#fff" stroke="#c7c7c7" stroke-width="1"/>
<rect x="1205.90" y="431.94" width="13.7" height="13.7" rx="0.7" fill="#fff" stroke="#c7c7c7" stroke-width="1"/><polyline points="1209.60,437.04 1213.70,441.44 1221.60,432.04" fill="none" stroke="#0a6eae" stroke-width="3.1"/>
<rect x="1327.90" y="431.94" width="13.7" height="13.7" rx="0.7" fill="#fff" stroke="#c7c7c7" stroke-width="1"/>
<text x="1426.4" y="441.64" font-family="'Liberation Sans', sans-serif" font-size="16.6" fill="#38a673" stroke="#38a673" stroke-width="0.3" textLength="7.4" lengthAdjust="spacingAndGlyphs">$</text><text x="1430.8" y="445.84" font-family="'Liberation Sans', sans-serif" font-size="11.3" font-weight="400" fill="#3a73b9" stroke="#3a73b9" stroke-width="0.45" textLength="14.6" lengthAdjust="spacingAndGlyphs">pln</text>
<rect x="3.50" y="456.59" width="13.7" height="13.7" rx="0.7" fill="#fff" stroke="#c7c7c7" stroke-width="1"/>
<rect x="23.10" y="456.59" width="13.6" height="13.6" rx="2.3" fill="#fcfcfc" stroke="#bebebe" stroke-width="1.15"/><rect x="25.80" y="462.89" width="1.5" height="1.6" fill="#333"/><rect x="28.85" y="462.89" width="1.5" height="1.6" fill="#333"/><rect x="31.90" y="462.89" width="1.5" height="1.6" fill="#333"/>
<path d="M250.00 455.79 h7.4 l1.3 2.7 h10.1 v0.9 h-18.8 z" fill="#6a6a6a"/><rect x="250.00" y="459.29" width="18.8" height="2.2" fill="#fff"/><path d="M250.00 461.39 h18.8 v10.6 a1.4 1.4 0 0 1 -1.4 1.4 h-16 a1.4 1.4 0 0 1 -1.4 -1.4 z" fill="#e8b364"/>
<rect x="853.70" y="456.59" width="13.7" height="13.7" rx="0.7" fill="#fff" stroke="#c7c7c7" stroke-width="1"/>
<rect x="968.60" y="456.59" width="13.7" height="13.7" rx="0.7" fill="#fff" stroke="#c7c7c7" stroke-width="1"/><polyline points="972.30,461.69 976.40,466.09 984.30,456.69" fill="none" stroke="#0a6eae" stroke-width="3.1"/>
<rect x="1095.10" y="456.59" width="13.7" height="13.7" rx="0.7" fill="#fff" stroke="#c7c7c7" stroke-width="1"/><polyline points="1098.80,461.69 1102.90,466.09 1110.80,456.69" fill="none" stroke="#0a6eae" stroke-width="3.1"/>
<rect x="1205.90" y="456.59" width="13.7" height="13.7" rx="0.7" fill="#fff" stroke="#c7c7c7" stroke-width="1"/><polyline points="1209.60,461.69 1213.70,466.09 1221.60,456.69" fill="none" stroke="#0a6eae" stroke-width="3.1"/>
<rect x="1327.90" y="456.59" width="13.7" height="13.7" rx="0.7" fill="#fff" stroke="#c7c7c7" stroke-width="1"/>
<text x="1426.4" y="466.29" font-family="'Liberation Sans', sans-serif" font-size="16.6" fill="#38a673" stroke="#38a673" stroke-width="0.3" textLength="7.4" lengthAdjust="spacingAndGlyphs">$</text><text x="1430.8" y="470.49" font-family="'Liberation Sans', sans-serif" font-size="11.3" font-weight="400" fill="#3a73b9" stroke="#3a73b9" stroke-width="0.45" textLength="14.6" lengthAdjust="spacingAndGlyphs">pln</text>
<rect x="3.50" y="481.23" width="13.7" height="13.7" rx="0.7" fill="#fff" stroke="#c7c7c7" stroke-width="1"/>
<rect x="23.10" y="481.23" width="13.6" height="13.6" rx="2.3" fill="#fcfcfc" stroke="#bebebe" stroke-width="1.15"/><rect x="25.80" y="487.53" width="1.5" height="1.6" fill="#333"/><rect x="28.85" y="487.53" width="1.5" height="1.6" fill="#333"/><rect x="31.90" y="487.53" width="1.5" height="1.6" fill="#333"/>
<path d="M250.00 480.43 h7.4 l1.3 2.7 h10.1 v0.9 h-18.8 z" fill="#6a6a6a"/><rect x="250.00" y="483.93" width="18.8" height="2.2" fill="#fff"/><path d="M250.00 486.03 h18.8 v10.6 a1.4 1.4 0 0 1 -1.4 1.4 h-16 a1.4 1.4 0 0 1 -1.4 -1.4 z" fill="#e8b364"/>
<rect x="853.70" y="481.23" width="13.7" height="13.7" rx="0.7" fill="#fff" stroke="#c7c7c7" stroke-width="1"/>
<rect x="968.60" y="481.23" width="13.7" height="13.7" rx="0.7" fill="#fff" stroke="#c7c7c7" stroke-width="1"/><polyline points="972.30,486.33 976.40,490.73 984.30,481.33" fill="none" stroke="#0a6eae" stroke-width="3.1"/>
<rect x="1095.10" y="481.23" width="13.7" height="13.7" rx="0.7" fill="#fff" stroke="#c7c7c7" stroke-width="1"/><polyline points="1098.80,486.33 1102.90,490.73 1110.80,481.33" fill="none" stroke="#0a6eae" stroke-width="3.1"/>
<rect x="1205.90" y="481.23" width="13.7" height="13.7" rx="0.7" fill="#fff" stroke="#c7c7c7" stroke-width="1"/><polyline points="1209.60,486.33 1213.70,490.73 1221.60,481.33" fill="none" stroke="#0a6eae" stroke-width="3.1"/>
<rect x="1327.90" y="481.23" width="13.7" height="13.7" rx="0.7" fill="#fff" stroke="#c7c7c7" stroke-width="1"/>
<text x="1426.4" y="490.93" font-family="'Liberation Sans', sans-serif" font-size="16.6" fill="#38a673" stroke="#38a673" stroke-width="0.3" textLength="7.4" lengthAdjust="spacingAndGlyphs">$</text><text x="1430.8" y="495.13" font-family="'Liberation Sans', sans-serif" font-size="11.3" font-weight="400" fill="#3a73b9" stroke="#3a73b9" stroke-width="0.45" textLength="14.6" lengthAdjust="spacingAndGlyphs">pln</text>
<rect x="3.50" y="505.87" width="13.7" height="13.7" rx="0.7" fill="#fff" stroke="#c7c7c7" stroke-width="1"/>
<rect x="23.10" y="505.87" width="13.6" height="13.6" rx="2.3" fill="#fcfcfc" stroke="#bebebe" stroke-width="1.15"/><rect x="25.80" y="512.17" width="1.5" height="1.6" fill="#333"/><rect x="28.85" y="512.17" width="1.5" height="1.6" fill="#333"/><rect x="31.90" y="512.17" width="1.5" height="1.6" fill="#333"/>
<path d="M250.00 505.07 h7.4 l1.3 2.7 h10.1 v0.9 h-18.8 z" fill="#6a6a6a"/><rect x="250.00" y="508.57" width="18.8" height="2.2" fill="#fff"/><path d="M250.00 510.67 h18.8 v10.6 a1.4 1.4 0 0 1 -1.4 1.4 h-16 a1.4 1.4 0 0 1 -1.4 -1.4 z" fill="#e8b364"/>
<rect x="853.70" y="505.87" width="13.7" height="13.7" rx="0.7" fill="#fff" stroke="#c7c7c7" stroke-width="1"/>
<rect x="968.60" y="505.87" width="13.7" height="13.7" rx="0.7" fill="#fff" stroke="#c7c7c7" stroke-width="1"/><polyline points="972.30,510.97 976.40,515.37 984.30,505.97" fill="none" stroke="#0a6eae" stroke-width="3.1"/>
<rect x="1095.10" y="505.87" width="13.7" height="13.7" rx="0.7" fill="#fff" stroke="#c7c7c7" stroke-width="1"/><polyline points="1098.80,510.97 1102.90,515.37 1110.80,505.97" fill="none" stroke="#0a6eae" stroke-width="3.1"/>
<rect x="1205.90" y="505.87" width="13.7" height="13.7" rx="0.7" fill="#fff" stroke="#c7c7c7" stroke-width="1"/><polyline points="1209.60,510.97 1213.70,515.37 1221.60,505.97" fill="none" stroke="#0a6eae" stroke-width="3.1"/>
<rect x="1327.90" y="505.87" width="13.7" height="13.7" rx="0.7" fill="#fff" stroke="#c7c7c7" stroke-width="1"/>
<text x="1426.4" y="515.57" font-family="'Liberation Sans', sans-serif" font-size="16.6" fill="#38a673" stroke="#38a673" stroke-width="0.3" textLength="7.4" lengthAdjust="spacingAndGlyphs">$</text><text x="1430.8" y="519.77" font-family="'Liberation Sans', sans-serif" font-size="11.3" font-weight="400" fill="#3a73b9" stroke="#3a73b9" stroke-width="0.45" textLength="14.6" lengthAdjust="spacingAndGlyphs">pln</text>
<rect x="3.50" y="530.52" width="13.7" height="13.7" rx="0.7" fill="#fff" stroke="#c7c7c7" stroke-width="1"/>
<rect x="23.10" y="530.52" width="13.6" height="13.6" rx="2.3" fill="#fcfcfc" stroke="#bebebe" stroke-width="1.15"/><rect x="25.80" y="536.82" width="1.5" height="1.6" fill="#333"/><rect x="28.85" y="536.82" width="1.5" height="1.6" fill="#333"/><rect x="31.90" y="536.82" width="1.5" height="1.6" fill="#333"/>
<path d="M250.00 529.72 h7.4 l1.3 2.7 h10.1 v0.9 h-18.8 z" fill="#6a6a6a"/><rect x="250.00" y="533.22" width="18.8" height="2.2" fill="#fff"/><path d="M250.00 535.32 h18.8 v10.6 a1.4 1.4 0 0 1 -1.4 1.4 h-16 a1.4 1.4 0 0 1 -1.4 -1.4 z" fill="#e8b364"/>
<rect x="853.70" y="530.52" width="13.7" height="13.7" rx="0.7" fill="#fff" stroke="#c7c7c7" stroke-width="1"/>
<rect x="968.60" y="530.52" width="13.7" height="13.7" rx="0.7" fill="#fff" stroke="#c7c7c7" stroke-width="1"/><polyline points="972.30,535.62 976.40,540.02 984.30,530.62" fill="none" stroke="#0a6eae" stroke-width="3.1"/>
<rect x="1095.10" y="530.52" width="13.7" height="13.7" rx="0.7" fill="#fff" stroke="#c7c7c7" stroke-width="1"/><polyline points="1098.80,535.62 1102.90,540.02 1110.80,530.62" fill="none" stroke="#0a6eae" stroke-width="3.1"/>
<rect x="1205.90" y="530.52" width="13.7" height="13.7" rx="0.7" fill="#fff" stroke="#c7c7c7" stroke-width="1"/><polyline points="1209.60,535.62 1213.70,540.02 1221.60,530.62" fill="none" stroke="#0a6eae" stroke-width="3.1"/>
<rect x="1327.90" y="530.52" width="13.7" height="13.7" rx="0.7" fill="#fff" stroke="#c7c7c7" stroke-width="1"/>
<text x="1426.4" y="540.22" font-family="'Liberation Sans', sans-serif" font-size="16.6" fill="#38a673" stroke="#38a673" stroke-width="0.3" textLength="7.4" lengthAdjust="spacingAndGlyphs">$</text><text x="1430.8" y="544.42" font-family="'Liberation Sans', sans-serif" font-size="11.3" font-weight="400" fill="#3a73b9" stroke="#3a73b9" stroke-width="0.45" textLength="14.6" lengthAdjust="spacingAndGlyphs">pln</text>
<rect x="3.50" y="555.16" width="13.7" height="13.7" rx="0.7" fill="#fff" stroke="#c7c7c7" stroke-width="1"/>
<rect x="23.10" y="555.16" width="13.6" height="13.6" rx="2.3" fill="#fcfcfc" stroke="#bebebe" stroke-width="1.15"/><rect x="25.80" y="561.46" width="1.5" height="1.6" fill="#333"/><rect x="28.85" y="561.46" width="1.5" height="1.6" fill="#333"/><rect x="31.90" y="561.46" width="1.5" height="1.6" fill="#333"/>
<path d="M250.00 554.36 h7.4 l1.3 2.7 h10.1 v0.9 h-18.8 z" fill="#6a6a6a"/><rect x="250.00" y="557.86" width="18.8" height="2.2" fill="#fff"/><path d="M250.00 559.96 h18.8 v10.6 a1.4 1.4 0 0 1 -1.4 1.4 h-16 a1.4 1.4 0 0 1 -1.4 -1.4 z" fill="#e8b364"/>
<rect x="853.70" y="555.16" width="13.7" height="13.7" rx="0.7" fill="#fff" stroke="#c7c7c7" stroke-width="1"/>
<rect x="968.60" y="555.16" width="13.7" height="13.7" rx="0.7" fill="#fff" stroke="#c7c7c7" stroke-width="1"/><polyline points="972.30,560.26 976.40,564.66 984.30,555.26" fill="none" stroke="#0a6eae" stroke-width="3.1"/>
<rect x="1095.10" y="555.16" width="13.7" height="13.7" rx="0.7" fill="#fff" stroke="#c7c7c7" stroke-width="1"/><polyline points="1098.80,560.26 1102.90,564.66 1110.80,555.26" fill="none" stroke="#0a6eae" stroke-width="3.1"/>
<rect x="1205.90" y="555.16" width="13.7" height="13.7" rx="0.7" fill="#fff" stroke="#c7c7c7" stroke-width="1"/><polyline points="1209.60,560.26 1213.70,564.66 1221.60,555.26" fill="none" stroke="#0a6eae" stroke-width="3.1"/>
<rect x="1327.90" y="555.16" width="13.7" height="13.7" rx="0.7" fill="#fff" stroke="#c7c7c7" stroke-width="1"/>
<text x="1426.4" y="564.86" font-family="'Liberation Sans', sans-serif" font-size="16.6" fill="#38a673" stroke="#38a673" stroke-width="0.3" textLength="7.4" lengthAdjust="spacingAndGlyphs">$</text><text x="1430.8" y="569.06" font-family="'Liberation Sans', sans-serif" font-size="11.3" font-weight="400" fill="#3a73b9" stroke="#3a73b9" stroke-width="0.45" textLength="14.6" lengthAdjust="spacingAndGlyphs">pln</text>
<rect x="3.50" y="579.80" width="13.7" height="13.7" rx="0.7" fill="#fff" stroke="#c7c7c7" stroke-width="1"/>
<rect x="23.10" y="579.80" width="13.6" height="13.6" rx="2.3" fill="#fcfcfc" stroke="#bebebe" stroke-width="1.15"/><rect x="25.80" y="586.10" width="1.5" height="1.6" fill="#333"/><rect x="28.85" y="586.10" width="1.5" height="1.6" fill="#333"/><rect x="31.90" y="586.10" width="1.5" height="1.6" fill="#333"/>
<path d="M250.00 579.00 h7.4 l1.3 2.7 h10.1 v0.9 h-18.8 z" fill="#6a6a6a"/><rect x="250.00" y="582.50" width="18.8" height="2.2" fill="#fff"/><path d="M250.00 584.60 h18.8 v10.6 a1.4 1.4 0 0 1 -1.4 1.4 h-16 a1.4 1.4 0 0 1 -1.4 -1.4 z" fill="#e8b364"/>
<rect x="853.70" y="579.80" width="13.7" height="13.7" rx="0.7" fill="#fff" stroke="#c7c7c7" stroke-width="1"/>
<rect x="968.60" y="579.80" width="13.7" height="13.7" rx="0.7" fill="#fff" stroke="#c7c7c7" stroke-width="1"/><polyline points="972.30,584.90 976.40,589.30 984.30,579.90" fill="none" stroke="#0a6eae" stroke-width="3.1"/>
<rect x="1095.10" y="579.80" width="13.7" height="13.7" rx="0.7" fill="#fff" stroke="#c7c7c7" stroke-width="1"/><polyline points="1098.80,584.90 1102.90,589.30 1110.80,579.90" fill="none" stroke="#0a6eae" stroke-width="3.1"/>
<rect x="1205.90" y="579.80" width="13.7" height="13.7" rx="0.7" fill="#fff" stroke="#c7c7c7" stroke-width="1"/><polyline points="1209.60,584.90 1213.70,589.30 1221.60,579.90" fill="none" stroke="#0a6eae" stroke-width="3.1"/>
<rect x="1327.90" y="579.80" width="13.7" height="13.7" rx="0.7" fill="#fff" stroke="#c7c7c7" stroke-width="1"/>
<text x="1426.4" y="589.50" font-family="'Liberation Sans', sans-serif" font-size="16.6" fill="#38a673" stroke="#38a673" stroke-width="0.3" textLength="7.4" lengthAdjust="spacingAndGlyphs">$</text><text x="1430.8" y="593.70" font-family="'Liberation Sans', sans-serif" font-size="11.3" font-weight="400" fill="#3a73b9" stroke="#3a73b9" stroke-width="0.45" textLength="14.6" lengthAdjust="spacingAndGlyphs">pln</text>
<rect x="0" y="328.22" width="1518" height="1.25" fill="#4a7fa6"/>
<rect x="0" y="351.31" width="1518" height="1.3" fill="#5c6c78"/>
<rect x="0" y="328.37" width="1" height="24.04" fill="#4b8ec2"/>
<rect x="286.6" y="329.87" width="239.6" height="20.80" fill="#fff" stroke="#0a6ead" stroke-width="2"/>
<line x1="0" y1="377.91" x2="1518" y2="377.91" stroke="#555" stroke-width="1.2" stroke-dasharray="4.2 4.3" stroke-dashoffset="4.9"/>
<line x1="0" y1="401.40" x2="1518" y2="401.40" stroke="#555" stroke-width="1.2" stroke-dasharray="4.2 4.3" stroke-dashoffset="2.6"/>
<rect x="67.7" y="377.91" width="161.8" height="23.49" fill="none" stroke="#555" stroke-width="1.2"/>
</svg>
<div id="tx">
<span class="t" style="left:171.90px;top:7px;font-size:10px;line-height:11px;font-weight:400;color:#fff;letter-spacing:-0.606px;-webkit-text-stroke:0.35px #fff;">Ai</span>
<span class="t" style="left:1084.70px;top:5px;font-size:15px;line-height:17px;font-weight:400;color:#fff;letter-spacing:0.225px;-webkit-text-stroke:0.3px #fff;">softlab erp</span>
<span class="t" style="left:14.60px;top:39px;font-size:13px;line-height:15px;font-weight:700;color:#1f1f1f;letter-spacing:-0.177px;">Plan kont</span>
<span class="t" style="left:32.00px;top:75px;font-size:13px;line-height:15px;font-weight:400;color:#1c1c1c;letter-spacing:0.128px;-webkit-text-stroke:0.22px #1c1c1c;">Nowy</span>
<span class="t" style="left:123.50px;top:75px;font-size:13px;line-height:15px;font-weight:400;color:#1c1c1c;letter-spacing:-0.246px;-webkit-text-stroke:0.22px #1c1c1c;">Edycja</span>
<span class="t" style="left:347.20px;top:75px;font-size:13px;line-height:15px;font-weight:400;color:#1c1c1c;letter-spacing:0.194px;-webkit-text-stroke:0.22px #1c1c1c;">Procedury</span>
<span class="t" style="left:441.00px;top:75px;font-size:13px;line-height:15px;font-weight:400;color:#1c1c1c;letter-spacing:0.341px;-webkit-text-stroke:0.22px #1c1c1c;">Zmień bilansowość</span>
<span class="t" style="left:573.70px;top:75px;font-size:13px;line-height:15px;font-weight:400;color:#1c1c1c;letter-spacing:0.355px;-webkit-text-stroke:0.22px #1c1c1c;">Zmień klasyfikowalność</span>
<span class="t" style="left:733.70px;top:75px;font-size:13px;line-height:15px;font-weight:400;color:#c2c2c2;letter-spacing:0.373px;-webkit-text-stroke:0.22px #c2c2c2;">Zmień dwustronność</span>
<span class="t" style="left:876.70px;top:75px;font-size:13px;line-height:15px;font-weight:400;color:#1c1c1c;letter-spacing:0.335px;-webkit-text-stroke:0.22px #1c1c1c;">Zmień walutę</span>
<span class="t" style="left:973.30px;top:75px;font-size:13px;line-height:15px;font-weight:400;color:#1c1c1c;letter-spacing:0.215px;-webkit-text-stroke:0.22px #1c1c1c;">Zmień RMP/RMK</span>
<span class="t" style="left:1093.70px;top:75px;font-size:13px;line-height:15px;font-weight:400;color:#1c1c1c;letter-spacing:0.285px;-webkit-text-stroke:0.22px #1c1c1c;">Zmień parametry podatkowe</span>
<span class="t" style="left:1301.60px;top:75px;font-size:13px;line-height:15px;font-weight:400;color:#1c1c1c;letter-spacing:0.261px;-webkit-text-stroke:0.22px #1c1c1c;">Blokuj konto</span>
<span class="t" style="left:1411.30px;top:75px;font-size:13px;line-height:15px;font-weight:400;color:#1c1c1c;letter-spacing:0.251px;-webkit-text-stroke:0.22px #1c1c1c;">Odblokuj konto</span>
<span class="t" style="left:19.60px;top:115px;font-size:13px;line-height:15px;font-weight:400;color:#666;letter-spacing:0.001px;-webkit-text-stroke:0.22px #666;">Konto:</span>
<span class="t" style="left:61.30px;top:115px;font-size:13px;line-height:15px;font-weight:700;color:#333;letter-spacing:-0.417px;">20x%</span>
<span class="t" style="left:155.00px;top:115px;font-size:13px;line-height:15px;font-weight:400;color:#a4a4a4;letter-spacing:0.173px;-webkit-text-stroke:0.22px #a4a4a4;">Znajdź konto...</span>
<span class="t" style="left:364.30px;top:115px;font-size:13px;line-height:15px;font-weight:400;color:#666;letter-spacing:-0.245px;-webkit-text-stroke:0.22px #666;">Rok:</span>
<span class="t" style="left:394.20px;top:115px;font-size:13px;line-height:15px;font-weight:700;color:#333;letter-spacing:-0.041px;">2021</span>
<span class="t" style="left:444.70px;top:115px;font-size:13px;line-height:15px;font-weight:400;color:#666;letter-spacing:0.000px;-webkit-text-stroke:0.22px #666;">:</span>
<span class="t" style="left:451.30px;top:115px;font-size:13px;line-height:15px;font-weight:700;color:#333;letter-spacing:-0.109px;">Wszystkie</span>
<span class="t" style="left:26.90px;top:155px;font-size:13px;line-height:15px;font-weight:400;color:#bdbdbd;letter-spacing:0.116px;-webkit-text-stroke:0.22px #bdbdbd;">Zwiń</span>
<span class="t" style="left:95.20px;top:155px;font-size:13px;line-height:15px;font-weight:400;color:#bdbdbd;letter-spacing:0.035px;-webkit-text-stroke:0.22px #bdbdbd;">Rozwiń</span>
<span class="t" style="left:178.20px;top:155px;font-size:13px;line-height:15px;font-weight:400;color:#bdbdbd;letter-spacing:-0.089px;-webkit-text-stroke:0.22px #bdbdbd;">Do góry</span>
<span class="t" style="left:253.30px;top:155px;font-size:13px;line-height:15px;font-weight:400;color:#1f1f1f;letter-spacing:0.273px;-webkit-text-stroke:0.22px #1f1f1f;">Pokaż wszystkie poziomy</span>
<span class="t" style="left:412.70px;top:155px;font-size:13px;line-height:15px;font-weight:700;color:#1f1f1f;letter-spacing:-0.586px;">1 :</span>
<span class="t" style="left:72.30px;top:184px;font-size:13px;line-height:15px;font-weight:400;color:#262626;letter-spacing:0.354px;-webkit-text-stroke:0.5px #262626;">Konto</span>
<span class="t" style="left:532.00px;top:184px;font-size:13px;line-height:15px;font-weight:400;color:#262626;letter-spacing:0.166px;-webkit-text-stroke:0.5px #262626;">Typ</span>
<span class="t" style="left:705.30px;top:184px;font-size:13px;line-height:15px;font-weight:400;color:#262626;letter-spacing:0.455px;-webkit-text-stroke:0.5px #262626;">Kontrahent</span>
<span class="t" style="left:819.30px;top:184px;font-size:13px;line-height:15px;font-weight:400;color:#262626;letter-spacing:0.616px;-webkit-text-stroke:0.5px #262626;">Atrybuty</span>
<span class="t" style="left:1405.20px;top:184px;font-size:13px;line-height:15px;font-weight:400;color:#262626;letter-spacing:0.223px;-webkit-text-stroke:0.5px #262626;">Waluta</span>
<span class="t" style="left:72.30px;top:208px;font-size:13px;line-height:15px;font-weight:400;color:#262626;letter-spacing:0.408px;-webkit-text-stroke:0.5px #262626;">Symbol</span>
<span class="t" style="left:235.00px;top:208px;font-size:13px;line-height:15px;font-weight:400;color:#262626;letter-spacing:0.000px;-webkit-text-stroke:0.22px #262626;">S</span>
<span class="t" style="left:290.30px;top:208px;font-size:13px;line-height:15px;font-weight:400;color:#262626;letter-spacing:0.089px;-webkit-text-stroke:0.5px #262626;">Opis</span>
<span class="t" style="left:532.00px;top:208px;font-size:13px;line-height:15px;font-weight:400;color:#262626;letter-spacing:0.246px;-webkit-text-stroke:0.5px #262626;">Rodzaj</span>
<span class="t" style="left:610.30px;top:208px;font-size:13px;line-height:15px;font-weight:400;color:#262626;letter-spacing:0.342px;-webkit-text-stroke:0.5px #262626;">Bilansowe</span>
<span class="t" style="left:705.30px;top:208px;font-size:13px;line-height:15px;font-weight:400;color:#262626;letter-spacing:0.359px;-webkit-text-stroke:0.5px #262626;">Logo</span>
<span class="t" style="left:819.30px;top:208px;font-size:13px;line-height:15px;font-weight:400;color:#262626;letter-spacing:0.124px;-webkit-text-stroke:0.5px #262626;">Czynne</span>
<span class="t" style="left:909.30px;top:208px;font-size:13px;line-height:15px;font-weight:400;color:#262626;letter-spacing:0.315px;-webkit-text-stroke:0.5px #262626;">Rozrachunkowe</span>
<span class="t" style="left:1049.30px;top:208px;font-size:13px;line-height:15px;font-weight:400;color:#262626;letter-spacing:0.403px;-webkit-text-stroke:0.5px #262626;">Dwustronne</span>
<span class="t" style="left:1161.00px;top:208px;font-size:13px;line-height:15px;font-weight:400;color:#262626;letter-spacing:0.429px;-webkit-text-stroke:0.5px #262626;">Bilansowe</span>
<span class="t" style="left:1272.00px;top:208px;font-size:13px;line-height:15px;font-weight:400;color:#262626;letter-spacing:0.433px;-webkit-text-stroke:0.5px #262626;">Klasyfikowane</span>
<span class="t" style="left:1405.20px;top:208px;font-size:13px;line-height:15px;font-weight:400;color:#262626;letter-spacing:0.186px;-webkit-text-stroke:0.5px #262626;">Rodzaj</span>
<span class="t" style="left:1473.90px;top:208px;font-size:13px;line-height:15px;font-weight:400;color:#262626;letter-spacing:0.326px;-webkit-text-stroke:0.5px #262626;">Maska</span>
<span class="t" style="left:75.80px;top:235px;font-size:13px;line-height:15px;font-weight:400;color:#1a1a1a;letter-spacing:0.116px;-webkit-text-stroke:0.22px #1a1a1a;">20x</span>
<span class="t" style="left:294.20px;top:235px;font-size:13px;line-height:15px;font-weight:400;color:#1a1a1a;letter-spacing:0.148px;-webkit-text-stroke:0.22px #1a1a1a;">Nalezności X</span>
<span class="t" style="left:535.50px;top:235px;font-size:13px;line-height:15px;font-weight:400;color:#1a1a1a;letter-spacing:0.239px;-webkit-text-stroke:0.22px #1a1a1a;">Aktywa</span>
<span class="t" style="left:614.30px;top:235px;font-size:13px;line-height:15px;font-weight:400;color:#1a1a1a;letter-spacing:0.204px;-webkit-text-stroke:0.22px #1a1a1a;">Bilansowe</span>
<span class="t" style="left:1477.90px;top:235px;font-size:13px;line-height:15px;font-weight:400;color:#1a1a1a;letter-spacing:0.000px;transform:scaleX(0.76);transform-origin:0 0;-webkit-text-stroke:0.35px #222;">%</span>
<span class="t" style="left:75.80px;top:260px;font-size:13px;line-height:15px;font-weight:400;color:#1a1a1a;letter-spacing:0.371px;-webkit-text-stroke:0.22px #1a1a1a;">20x/01</span>
<span class="t" style="left:294.20px;top:260px;font-size:13px;line-height:15px;font-weight:400;color:#1a1a1a;letter-spacing:0.201px;-webkit-text-stroke:0.22px #1a1a1a;">krajowe</span>
<span class="t" style="left:535.50px;top:260px;font-size:13px;line-height:15px;font-weight:400;color:#1a1a1a;letter-spacing:0.239px;-webkit-text-stroke:0.22px #1a1a1a;">Aktywa</span>
<span class="t" style="left:614.30px;top:260px;font-size:13px;line-height:15px;font-weight:400;color:#1a1a1a;letter-spacing:0.204px;-webkit-text-stroke:0.22px #1a1a1a;">Bilansowe</span>
<span class="t" style="left:1477.90px;top:260px;font-size:13px;line-height:15px;font-weight:400;color:#1a1a1a;letter-spacing:0.000px;transform:scaleX(0.76);transform-origin:0 0;-webkit-text-stroke:0.35px #222;">%</span>
<span class="t" style="left:75.80px;top:284px;font-size:13px;line-height:15px;font-weight:400;color:#1a1a1a;letter-spacing:0.618px;-webkit-text-stroke:0.22px #1a1a1a;">20x/01/1</span>
<span class="t" style="left:294.20px;top:284px;font-size:13px;line-height:15px;font-weight:400;color:#1a1a1a;letter-spacing:0.268px;-webkit-text-stroke:0.22px #1a1a1a;">powiazane</span>
<span class="t" style="left:535.50px;top:284px;font-size:13px;line-height:15px;font-weight:400;color:#1a1a1a;letter-spacing:0.239px;-webkit-text-stroke:0.22px #1a1a1a;">Aktywa</span>
<span class="t" style="left:614.30px;top:284px;font-size:13px;line-height:15px;font-weight:400;color:#1a1a1a;letter-spacing:0.204px;-webkit-text-stroke:0.22px #1a1a1a;">Bilansowe</span>
<span class="t" style="left:1477.90px;top:284px;font-size:13px;line-height:15px;font-weight:400;color:#1a1a1a;letter-spacing:0.000px;transform:scaleX(0.76);transform-origin:0 0;-webkit-text-stroke:0.35px #222;">%</span>
<span class="t" style="left:75.80px;top:309px;font-size:13px;line-height:15px;font-weight:400;color:#1a1a1a;letter-spacing:0.720px;-webkit-text-stroke:0.22px #1a1a1a;">20x/01/1/1</span>
<span class="t" style="left:294.20px;top:309px;font-size:13px;line-height:15px;font-weight:400;color:#1a1a1a;letter-spacing:0.081px;-webkit-text-stroke:0.22px #1a1a1a;">zalezne</span>
<span class="t" style="left:535.50px;top:309px;font-size:13px;line-height:15px;font-weight:400;color:#1a1a1a;letter-spacing:0.239px;-webkit-text-stroke:0.22px #1a1a1a;">Aktywa</span>
<span class="t" style="left:614.30px;top:309px;font-size:13px;line-height:15px;font-weight:400;color:#1a1a1a;letter-spacing:0.204px;-webkit-text-stroke:0.22px #1a1a1a;">Bilansowe</span>
<span class="t" style="left:1477.90px;top:309px;font-size:13px;line-height:15px;font-weight:400;color:#1a1a1a;letter-spacing:0.000px;transform:scaleX(0.76);transform-origin:0 0;-webkit-text-stroke:0.35px #222;">%</span>
<span class="t" style="left:75.80px;top:333px;font-size:13px;line-height:15px;font-weight:400;color:#1a1a1a;letter-spacing:0.430px;-webkit-text-stroke:0.22px #1a1a1a;">20x/01/1/1/07-F-000-C</span>
<span class="t" style="left:294.20px;top:333px;font-size:13px;line-height:15px;font-weight:400;color:#1a1a1a;letter-spacing:0.152px;-webkit-text-stroke:0.22px #1a1a1a;">Nasza firma 0 - centrala</span>
<span class="t" style="left:535.50px;top:333px;font-size:13px;line-height:15px;font-weight:400;color:#1a1a1a;letter-spacing:0.239px;-webkit-text-stroke:0.22px #1a1a1a;">Aktywa</span>
<span class="t" style="left:614.30px;top:333px;font-size:13px;line-height:15px;font-weight:400;color:#1a1a1a;letter-spacing:0.204px;-webkit-text-stroke:0.22px #1a1a1a;">Bilansowe</span>
<span class="t" style="left:709.30px;top:333px;font-size:13px;line-height:15px;font-weight:400;color:#1a1a1a;letter-spacing:-0.197px;-webkit-text-stroke:0.22px #1a1a1a;">07-F-000-C</span>
<span class="t" style="left:1477.90px;top:333px;font-size:13px;line-height:15px;font-weight:400;color:#1a1a1a;letter-spacing:0.000px;transform:scaleX(0.76);transform-origin:0 0;-webkit-text-stroke:0.35px #222;">%</span>
<span class="t" style="left:75.80px;top:358px;font-size:13px;line-height:15px;font-weight:400;color:#1a1a1a;letter-spacing:0.865px;-webkit-text-stroke:0.22px #1a1a1a;">20x/01/1/2</span>
<span class="t" style="left:294.20px;top:358px;font-size:13px;line-height:15px;font-weight:400;color:#1a1a1a;letter-spacing:0.276px;-webkit-text-stroke:0.22px #1a1a1a;">stowarzyszone</span>
<span class="t" style="left:535.50px;top:358px;font-size:13px;line-height:15px;font-weight:400;color:#1a1a1a;letter-spacing:0.239px;-webkit-text-stroke:0.22px #1a1a1a;">Aktywa</span>
<span class="t" style="left:614.30px;top:358px;font-size:13px;line-height:15px;font-weight:400;color:#1a1a1a;letter-spacing:0.204px;-webkit-text-stroke:0.22px #1a1a1a;">Bilansowe</span>
<span class="t" style="left:1477.90px;top:358px;font-size:13px;line-height:15px;font-weight:400;color:#1a1a1a;letter-spacing:0.000px;transform:scaleX(0.76);transform-origin:0 0;-webkit-text-stroke:0.35px #222;">%</span>
<span class="t" style="left:75.80px;top:383px;font-size:13px;line-height:15px;font-weight:400;color:#1a1a1a;letter-spacing:0.865px;-webkit-text-stroke:0.22px #1a1a1a;">20x/01/1/3</span>
<span class="t" style="left:294.20px;top:383px;font-size:13px;line-height:15px;font-weight:400;color:#1a1a1a;letter-spacing:0.271px;-webkit-text-stroke:0.22px #1a1a1a;">pozostałe powiązane</span>
<span class="t" style="left:535.50px;top:383px;font-size:13px;line-height:15px;font-weight:400;color:#1a1a1a;letter-spacing:0.239px;-webkit-text-stroke:0.22px #1a1a1a;">Aktywa</span>
<span class="t" style="left:614.30px;top:383px;font-size:13px;line-height:15px;font-weight:400;color:#1a1a1a;letter-spacing:0.204px;-webkit-text-stroke:0.22px #1a1a1a;">Bilansowe</span>
<span class="t" style="left:1477.90px;top:383px;font-size:13px;line-height:15px;font-weight:400;color:#1a1a1a;letter-spacing:0.000px;transform:scaleX(0.76);transform-origin:0 0;-webkit-text-stroke:0.35px #222;">%</span>
<span class="t" style="left:75.80px;top:407px;font-size:13px;line-height:15px;font-weight:400;color:#1a1a1a;letter-spacing:0.789px;-webkit-text-stroke:0.22px #1a1a1a;">20x/01/2</span>
<span class="t" style="left:294.20px;top:407px;font-size:13px;line-height:15px;font-weight:400;color:#1a1a1a;letter-spacing:0.330px;-webkit-text-stroke:0.22px #1a1a1a;">pozostałe</span>
<span class="t" style="left:535.50px;top:407px;font-size:13px;line-height:15px;font-weight:400;color:#1a1a1a;letter-spacing:0.239px;-webkit-text-stroke:0.22px #1a1a1a;">Aktywa</span>
<span class="t" style="left:614.30px;top:407px;font-size:13px;line-height:15px;font-weight:400;color:#1a1a1a;letter-spacing:0.204px;-webkit-text-stroke:0.22px #1a1a1a;">Bilansowe</span>
<span class="t" style="left:1477.90px;top:407px;font-size:13px;line-height:15px;font-weight:400;color:#1a1a1a;letter-spacing:0.000px;transform:scaleX(0.76);transform-origin:0 0;-webkit-text-stroke:0.35px #222;">%</span>
<span class="t" style="left:75.80px;top:432px;font-size:13px;line-height:15px;font-weight:400;color:#1a1a1a;letter-spacing:0.680px;-webkit-text-stroke:0.22px #1a1a1a;">20x/01/2/000033</span>
<span class="t" style="left:294.20px;top:432px;font-size:13px;line-height:15px;font-weight:400;color:#1a1a1a;letter-spacing:-0.238px;-webkit-text-stroke:0.22px #1a1a1a;">MIASTO STOŁECZNE WARSZAWA</span>
<span class="t" style="left:535.50px;top:432px;font-size:13px;line-height:15px;font-weight:400;color:#1a1a1a;letter-spacing:0.239px;-webkit-text-stroke:0.22px #1a1a1a;">Aktywa</span>
<span class="t" style="left:614.30px;top:432px;font-size:13px;line-height:15px;font-weight:400;color:#1a1a1a;letter-spacing:0.204px;-webkit-text-stroke:0.22px #1a1a1a;">Bilansowe</span>
<span class="t" style="left:709.30px;top:432px;font-size:13px;line-height:15px;font-weight:400;color:#1a1a1a;letter-spacing:0.322px;-webkit-text-stroke:0.22px #1a1a1a;">000033</span>
<span class="t" style="left:1477.90px;top:432px;font-size:13px;line-height:15px;font-weight:400;color:#1a1a1a;letter-spacing:0.000px;transform:scaleX(0.76);transform-origin:0 0;-webkit-text-stroke:0.35px #222;">%</span>
<span class="t" style="left:75.80px;top:457px;font-size:13px;line-height:15px;font-weight:400;color:#1a1a1a;letter-spacing:0.591px;-webkit-text-stroke:0.22px #1a1a1a;">20x/02</span>
<span class="t" style="left:294.20px;top:457px;font-size:13px;line-height:15px;font-weight:400;color:#1a1a1a;letter-spacing:0.169px;-webkit-text-stroke:0.22px #1a1a1a;">zagraniczne</span>
<span class="t" style="left:535.50px;top:457px;font-size:13px;line-height:15px;font-weight:400;color:#1a1a1a;letter-spacing:0.239px;-webkit-text-stroke:0.22px #1a1a1a;">Aktywa</span>
<span class="t" style="left:614.30px;top:457px;font-size:13px;line-height:15px;font-weight:400;color:#1a1a1a;letter-spacing:0.204px;-webkit-text-stroke:0.22px #1a1a1a;">Bilansowe</span>
<span class="t" style="left:1477.90px;top:457px;font-size:13px;line-height:15px;font-weight:400;color:#1a1a1a;letter-spacing:0.000px;transform:scaleX(0.76);transform-origin:0 0;-webkit-text-stroke:0.35px #222;">%</span>
<span class="t" style="left:75.80px;top:481px;font-size:13px;line-height:15px;font-weight:400;color:#1a1a1a;letter-spacing:0.618px;-webkit-text-stroke:0.22px #1a1a1a;">20x/02/1</span>
<span class="t" style="left:294.20px;top:481px;font-size:13px;line-height:15px;font-weight:400;color:#1a1a1a;letter-spacing:0.268px;-webkit-text-stroke:0.22px #1a1a1a;">powiązane</span>
<span class="t" style="left:535.50px;top:481px;font-size:13px;line-height:15px;font-weight:400;color:#1a1a1a;letter-spacing:0.239px;-webkit-text-stroke:0.22px #1a1a1a;">Aktywa</span>
<span class="t" style="left:614.30px;top:481px;font-size:13px;line-height:15px;font-weight:400;color:#1a1a1a;letter-spacing:0.204px;-webkit-text-stroke:0.22px #1a1a1a;">Bilansowe</span>
<span class="t" style="left:1477.90px;top:481px;font-size:13px;line-height:15px;font-weight:400;color:#1a1a1a;letter-spacing:0.000px;transform:scaleX(0.76);transform-origin:0 0;-webkit-text-stroke:0.35px #222;">%</span>
<span class="t" style="left:75.80px;top:506px;font-size:13px;line-height:15px;font-weight:400;color:#1a1a1a;letter-spacing:0.720px;-webkit-text-stroke:0.22px #1a1a1a;">20x/02/1/1</span>
<span class="t" style="left:294.20px;top:506px;font-size:13px;line-height:15px;font-weight:400;color:#1a1a1a;letter-spacing:0.081px;-webkit-text-stroke:0.22px #1a1a1a;">zależne</span>
<span class="t" style="left:535.50px;top:506px;font-size:13px;line-height:15px;font-weight:400;color:#1a1a1a;letter-spacing:0.239px;-webkit-text-stroke:0.22px #1a1a1a;">Aktywa</span>
<span class="t" style="left:614.30px;top:506px;font-size:13px;line-height:15px;font-weight:400;color:#1a1a1a;letter-spacing:0.204px;-webkit-text-stroke:0.22px #1a1a1a;">Bilansowe</span>
<span class="t" style="left:1477.90px;top:506px;font-size:13px;line-height:15px;font-weight:400;color:#1a1a1a;letter-spacing:0.000px;transform:scaleX(0.76);transform-origin:0 0;-webkit-text-stroke:0.35px #222;">%</span>
<span class="t" style="left:75.80px;top:531px;font-size:13px;line-height:15px;font-weight:400;color:#1a1a1a;letter-spacing:0.865px;-webkit-text-stroke:0.22px #1a1a1a;">20x/02/1/2</span>
<span class="t" style="left:294.20px;top:531px;font-size:13px;line-height:15px;font-weight:400;color:#1a1a1a;letter-spacing:0.276px;-webkit-text-stroke:0.22px #1a1a1a;">stowarzyszone</span>
<span class="t" style="left:535.50px;top:531px;font-size:13px;line-height:15px;font-weight:400;color:#1a1a1a;letter-spacing:0.239px;-webkit-text-stroke:0.22px #1a1a1a;">Aktywa</span>
<span class="t" style="left:614.30px;top:531px;font-size:13px;line-height:15px;font-weight:400;color:#1a1a1a;letter-spacing:0.204px;-webkit-text-stroke:0.22px #1a1a1a;">Bilansowe</span>
<span class="t" style="left:1477.90px;top:531px;font-size:13px;line-height:15px;font-weight:400;color:#1a1a1a;letter-spacing:0.000px;transform:scaleX(0.76);transform-origin:0 0;-webkit-text-stroke:0.35px #222;">%</span>
<span class="t" style="left:75.80px;top:555px;font-size:13px;line-height:15px;font-weight:400;color:#1a1a1a;letter-spacing:0.865px;-webkit-text-stroke:0.22px #1a1a1a;">20x/02/1/3</span>
<span class="t" style="left:294.20px;top:555px;font-size:13px;line-height:15px;font-weight:400;color:#1a1a1a;letter-spacing:0.188px;-webkit-text-stroke:0.22px #1a1a1a;">inne powiązane</span>
<span class="t" style="left:535.50px;top:555px;font-size:13px;line-height:15px;font-weight:400;color:#1a1a1a;letter-spacing:0.239px;-webkit-text-stroke:0.22px #1a1a1a;">Aktywa</span>
<span class="t" style="left:614.30px;top:555px;font-size:13px;line-height:15px;font-weight:400;color:#1a1a1a;letter-spacing:0.204px;-webkit-text-stroke:0.22px #1a1a1a;">Bilansowe</span>
<span class="t" style="left:1477.90px;top:555px;font-size:13px;line-height:15px;font-weight:400;color:#1a1a1a;letter-spacing:0.000px;transform:scaleX(0.76);transform-origin:0 0;-webkit-text-stroke:0.35px #222;">%</span>
<span class="t" style="left:75.80px;top:580px;font-size:13px;line-height:15px;font-weight:400;color:#1a1a1a;letter-spacing:0.789px;-webkit-text-stroke:0.22px #1a1a1a;">20x/02/2</span>
<span class="t" style="left:294.20px;top:580px;font-size:13px;line-height:15px;font-weight:400;color:#1a1a1a;letter-spacing:0.330px;-webkit-text-stroke:0.22px #1a1a1a;">pozostałe</span>
<span class="t" style="left:535.50px;top:580px;font-size:13px;line-height:15px;font-weight:400;color:#1a1a1a;letter-spacing:0.239px;-webkit-text-stroke:0.22px #1a1a1a;">Aktywa</span>
<span class="t" style="left:614.30px;top:580px;font-size:13px;line-height:15px;font-weight:400;color:#1a1a1a;letter-spacing:0.204px;-webkit-text-stroke:0.22px #1a1a1a;">Bilansowe</span>
<span class="t" style="left:1477.90px;top:580px;font-size:13px;line-height:15px;font-weight:400;color:#1a1a1a;letter-spacing:0.000px;transform:scaleX(0.76);transform-origin:0 0;-webkit-text-stroke:0.35px #222;">%</span>
</div>
</body></html>
